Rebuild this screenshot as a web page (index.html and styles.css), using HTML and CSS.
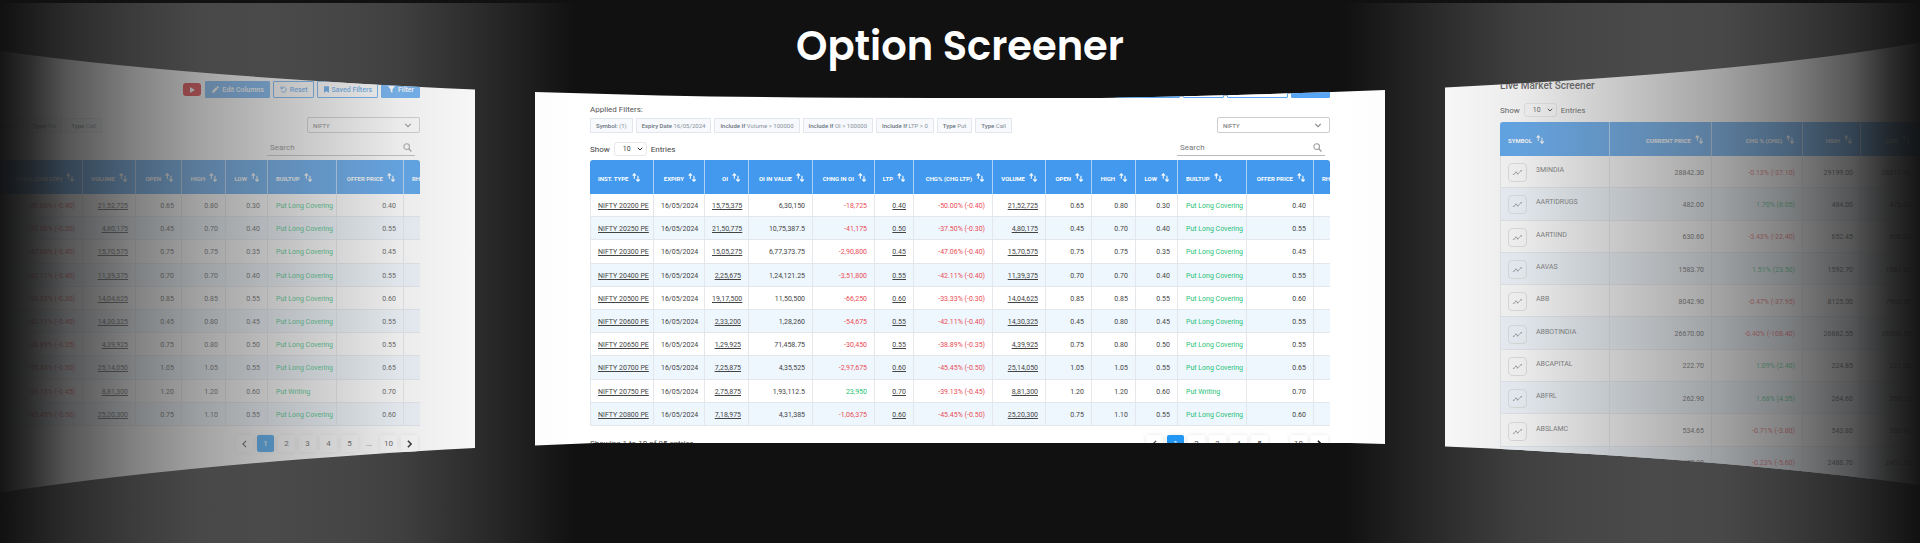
FILE: index.html
```html
<!DOCTYPE html>
<html lang="en">
<head>
<meta charset="utf-8">
<title>Option Screener</title>
<meta name="viewport" content="width=device-width, initial-scale=1">
<link rel="stylesheet" href="styles.css">
</head>
<body>
<svg class="sprite" aria-hidden="true">
  <symbol id="i-sort" viewBox="0 0 14 16"><path d="M4 10V1.5M1 4.5l3-3.2 3 3.2M10.500 5v9M7.500 11.500l3 3.200 3-3.200" fill="none" stroke="currentColor" stroke-width="1.900"/></symbol>
  <symbol id="i-down" viewBox="0 0 12 8"><path d="M1.500 1.500L6 6l4.500-4.500" fill="none" stroke="currentColor" stroke-width="1.800"/></symbol>
  <symbol id="i-search" viewBox="0 0 16 16"><circle cx="6.500" cy="6.500" r="5" fill="none" stroke="currentColor" stroke-width="1.800"/><path d="M10.200 10.200l4.800 4.800" stroke="currentColor" stroke-width="2.200"/></symbol>
  <symbol id="i-pencil" viewBox="0 0 16 16"><path fill="currentColor" d="M0 16l1-5 8-8 4 4-8 8zM10 2l1.500-1.500q1-.8 2 0l2 2q.8 1 0 2L14 6z"/></symbol>
  <symbol id="i-reset" viewBox="0 0 16 16"><path d="M3 5a6 6 0 1 1-.5 5.500M2 1v5h5" fill="none" stroke="currentColor" stroke-width="2"/></symbol>
  <symbol id="i-mark" viewBox="0 0 12 16"><path fill="currentColor" d="M0 1q0-1 1-1h10q1 0 1 1v15l-6-4-6 4z"/></symbol>
  <symbol id="i-funnel" viewBox="0 0 16 16"><path fill="currentColor" d="M0 0h16l-6 8v8l-4-3V8z"/></symbol>
  <symbol id="i-trend" viewBox="0 0 18 10"><path d="M1 9l5-4.500 3.500 3L17 1" fill="none" stroke="currentColor" stroke-width="1.300"/><g fill="currentColor"><circle cx="1.400" cy="8.600" r="1.300"/><circle cx="6" cy="4.500" r="1.300"/><circle cx="9.500" cy="7.500" r="1.300"/><circle cx="16.600" cy="1.400" r="1.300"/></g></symbol>
</svg>

<section class="showcase">
  <h1 class="showcase-title">Option Screener</h1>
  <div class="track" id="track"></div>
</section>

<template id="option-screen">
  <div class="screen">
    <div class="actions">
      <button class="tube" aria-label="Watch video"><svg viewBox="0 0 6 6"><path d="M1 0l5 3-5 3z" fill="#fff"/></svg></button>
      <button class="btn solid"><svg><use href="#i-pencil"/></svg>Edit Columns</button>
      <button class="btn"><svg><use href="#i-reset"/></svg>Reset</button>
      <button class="btn"><svg class="narrow"><use href="#i-mark"/></svg>Saved Filters</button>
      <button class="btn solid"><svg><use href="#i-funnel"/></svg>Filter</button>
    </div>
    <div class="filters">
      <div>
        <p class="filters-label">Applied Filters:</p>
        <ul class="chips">
          <li><b>Symbol:</b> (1)</li>
          <li><b>Expiry Date</b> 16/05/2024</li>
          <li><b>Include If</b> Volume &gt; 100000</li>
          <li><b>Include If</b> OI &gt; 100000</li>
          <li><b>Include If</b> LTP &gt; 0</li>
          <li><b>Type</b> Put</li>
          <li><b>Type</b> Call</li>
        </ul>
      </div>
      <div class="pick pick-wide">
        <select aria-label="Index"><option>NIFTY</option></select>
        <svg><use href="#i-down"/></svg>
      </div>
    </div>
    <div class="tools">
      <label class="show">Show
        <span class="pick"><select><option>10</option></select><svg><use href="#i-down"/></svg></span>
        Entries</label>
      <div class="search">
        <input type="search" placeholder="Search" aria-label="Search">
        <svg><use href="#i-search"/></svg>
      </div>
    </div>
    <div class="table-wrap"><table class="grid options"></table></div>
    <div class="foot">
      <p>Showing 1 to 10 of 95 entries</p>
      <nav class="pages" aria-label="Pages">
        <button aria-label="Previous"><svg viewBox="0 0 6 10"><path d="M5 1L1 5l4 4" fill="none" stroke="currentColor" stroke-width="1.500"/></svg></button>
        <button class="current">1</button><button>2</button><button>3</button><button>4</button><button>5</button>
        <span>...</span>
        <button>10</button>
        <button aria-label="Next"><svg viewBox="0 0 6 10"><path d="M1 1l4 4-4 4" fill="none" stroke="#111" stroke-width="2"/></svg></button>
      </nav>
    </div>
  </div>
</template>

<template id="market-screen">
  <div class="screen market">
    <h2>Live Market Screener</h2>
    <div class="tools">
      <label class="show">Show
        <span class="pick"><select><option>10</option></select><svg><use href="#i-down"/></svg></span>
        Entries</label>
    </div>
    <div class="table-wrap"><table class="grid stocks"></table></div>
  </div>
</template>
<script src="app.js"></script>
</body>
</html>
```

FILE: styles.css
```css
* { box-sizing: border-box; }

body {
  margin: 0;
  background: #111;
  font-family: Roboto, "Liberation Sans", sans-serif;
  color: #444;
}

p, h1, h2, ul { margin: 0; padding: 0; }
button, select, input { font: inherit; color: inherit; }
.sprite { display: none; }

.showcase {
  position: relative;
  display: grid;
  min-height: 100vh;
  overflow: hidden;
}

/* Side shades that fade the outer slides into the dark page */
.showcase::before,
.showcase::after {
  content: "";
  position: absolute;
  z-index: 2;
  top: 3px;
  bottom: 0;
  width: 575px;
  pointer-events: none;
  --stops:
    rgb(17 17 17 / .98) 0,
    rgb(29 29 29 / .93) 30px,
    rgb(48 48 48 / .82) 67px,
    rgb(77 77 77 / .71) 133px,
    rgb(106 106 106 / .62) 200px,
    rgb(126 126 126 / .52) 267px,
    rgb(155 155 155 / .38) 350px,
    rgb(184 184 184 / .28) 400px,
    rgb(202 202 202 / .15) 475px,
    rgb(210 210 210 / .07) 525px,
    rgb(220 220 220 / 0) 575px;
}
.showcase::before { left: 0; background: linear-gradient(90deg, var(--stops)); }
.showcase::after { right: 0; background: linear-gradient(270deg, var(--stops)); }

.showcase-title {
  grid-area: 1 / 1;
  justify-self: center;
  align-self: start;
  z-index: 1;
  padding-top: 22px;
  font: 600 40px/48px Poppins, Inter, sans-serif;
  color: #fff;
}

.track {
  grid-area: 1 / 1;
  display: grid;
  grid-template-columns: repeat(3, 850px);
  gap: 60px;
  justify-content: center;
  min-width: 0;
}

/* Slides: curved edges follow the bend of the carousel */
.slide {
  overflow: hidden;
  background: #fff;
}
.slide-left { clip-path: path("M0 0L375 51Q553 76 850 89.500V448Q569 463 375 492.500L0 560Z"); }
.slide-center { clip-path: path("M0 92L125 95.500Q250 98 400 98H565Q700 96 850 90V444L815 443H60L0 445.500Z"); }
.slide-right { clip-path: path("M0 87.500Q310 72 475 42.500L850 -30V560L475 485Q273 458 0 446.500Z"); }

.screen { padding: 81px 55px 0; font-size: 8px; }
.screen.market { padding-top: 79px; }
.market h2 { font-weight: 500; font-size: 10px; line-height: 14px; margin-bottom: 10px; }

/* Buttons */
.actions { display: flex; justify-content: flex-end; align-items: center; gap: 3px; }
.btn {
  display: flex;
  align-items: center;
  gap: 3px;
  height: 17px;
  padding: 0 5px 0 6px;
  border: 1px solid #58a6f3;
  border-radius: 1px;
  background: #fff;
  color: #4f9fee;
  font-size: 7px;
  font-weight: 500;
}
.btn svg { width: 7px; height: 7px; }
.btn svg.narrow { width: 5px; }
.btn.solid { background: #58a6f3; color: #fff; }
.tube {
  display: grid;
  place-items: center;
  width: 18px;
  height: 13px;
  margin-right: 1px;
  padding: 0;
  border: 0;
  border-radius: 3px;
  background: #d80f14;
}
.tube svg { width: 6px; height: 6px; }

/* Filters */
.filters { display: flex; justify-content: space-between; align-items: flex-end; margin-top: 7px; }
.filters-label { line-height: 9px; color: #555; margin-bottom: 4px; }
.chips { display: flex; gap: 3px; list-style: none; }
.chips li {
  height: 15px;
  padding: 0 5px;
  border: 1px solid #e2e7ee;
  background: #f7f9fc;
  color: #87919b;
  font-size: 6px;
  line-height: 13px;
  white-space: nowrap;
}
.chips b { font-weight: 500; color: #6b7580; }

.pick { display: inline-grid; align-items: center; }
.pick select,
.pick svg { grid-area: 1 / 1; }
.pick select {
  appearance: none;
  width: 33px;
  height: 14px;
  padding: 0 8px;
  border: 1px solid #e6e8ec;
  border-radius: 3px;
  background: transparent;
  font-size: 7px;
}
.pick svg { justify-self: end; width: 6px; height: 4px; margin-right: 4px; color: #111; pointer-events: none; }
.pick-wide select { width: 113px; height: 16px; padding: 0 5px; border-color: #ccc; border-radius: 2px; color: #666; font-size: 6px; }
.pick-wide svg { width: 8px; height: 5px; margin-right: 8px; color: #888; }

.tools { display: flex; justify-content: space-between; margin: 9px 0 4px; }
.market .tools { margin: 0 0 5px; }
.show { display: flex; align-items: center; gap: 4px; height: 14px; color: #444; }
.search { display: flex; align-items: center; width: 148px; height: 14px; margin-right: 5px; padding: 0 3px 2px; border-bottom: 1px solid #bbb; }
.search input { flex: 1; min-width: 0; padding: 0; border: 0; outline: 0; background: none; }
.search input::placeholder { color: #777; }
.search svg { width: 9px; height: 9px; color: #999; }

/* Tables */
.table-wrap { overflow: hidden; border-radius: 3px 3px 0 0; }
.grid { table-layout: fixed; width: 100%; border-collapse: separate; border-spacing: 0; font-size: 7px; }
.options { width: 784px; height: 266px; }
.stocks { height: 357px; }
.grid th {
  height: 34px;
  padding: 0 8px 0 7px;
  border-right: 1px solid #a9d0f7;
  background: #4299ed;
  color: #fff;
  font-size: 6px;
  font-weight: 700;
  text-align: right;
  white-space: nowrap;
}
.grid th svg { width: 8px; height: 9px; margin-left: 4px; vertical-align: -1px; }
.grid td {
  padding: 2px 7px 0;
  border: solid #e3e7ec;
  border-width: 0 1px 1px 0;
  text-align: right;
  white-space: nowrap;
}
.grid td:first-child { border-left-width: 1px; padding-left: 7px; }
.grid .left { text-align: left; padding-left: 8px; }
.grid tbody tr:nth-child(even) { background: #eff7fe; }
.grid a { color: inherit; text-decoration: underline; }
.grid .down { color: #ea4b55; }
.grid .up { color: #1fbf75; }

.stock { display: flex; align-items: center; gap: 9px; color: #666; }
.stock > span { padding-bottom: 5px; }
.chart {
  display: grid;
  place-items: center;
  width: 19px;
  height: 19px;
  padding: 0;
  border: 1px solid #ddd;
  border-radius: 4px;
  background: transparent;
  color: #777;
}
.chart svg { width: 9px; height: 5px; }

/* Footer */
.foot { display: flex; justify-content: space-between; align-items: center; margin: 9px 2px 0 0; }
.pages { display: flex; align-items: center; gap: 4px; }
.pages button {
  display: grid;
  place-items: center;
  width: 17px;
  height: 17px;
  padding: 0;
  border: 0;
  border-radius: 2px;
  background: #fff;
  box-shadow: 0 0 4px #0000001a;
}
.pages button.current { background: #2196f3; color: #fff; }
.pages span { width: 14px; text-align: center; }
.pages svg { width: 5px; height: 8px; }
```

FILE: app.js
```js
const optionCols = [
  ["INST. TYPE", 64], ["EXPIRY", 51], ["OI", 44], ["OI IN VALUE", 64], ["CHNG IN OI", 62],
  ["LTP", 39], ["CHG% (CHG LTP)", 79], ["VOLUME", 53], ["OPEN", 46], ["HIGH", 44],
  ["LOW", 42], ["BUILTUP", 69], ["OFFER PRICE", 67], ["RHO", 60]
];
const optionRows = [
  ["20200", "15,75,375", "6,30,150", "-18,725", "0.40", "-50.00% (-0.40)", "21,52,725", "0.65", "0.80", "0.30", "Put Long Covering", "0.40"],
  ["20250", "21,50,775", "10,75,387.5", "-41,175", "0.50", "-37.50% (-0.30)", "4,80,175", "0.45", "0.70", "0.40", "Put Long Covering", "0.55"],
  ["20300", "15,05,275", "6,77,373.75", "-2,90,800", "0.45", "-47.06% (-0.40)", "15,70,575", "0.75", "0.75", "0.35", "Put Long Covering", "0.45"],
  ["20400", "2,25,675", "1,24,121.25", "-3,51,800", "0.55", "-42.11% (-0.40)", "11,39,375", "0.70", "0.70", "0.40", "Put Long Covering", "0.55"],
  ["20500", "19,17,500", "11,50,500", "-66,250", "0.60", "-33.33% (-0.30)", "14,04,625", "0.85", "0.85", "0.55", "Put Long Covering", "0.60"],
  ["20600", "2,33,200", "1,28,260", "-54,675", "0.55", "-42.11% (-0.40)", "14,30,325", "0.45", "0.80", "0.45", "Put Long Covering", "0.55"],
  ["20650", "1,29,925", "71,458.75", "-30,450", "0.55", "-38.89% (-0.35)", "4,39,925", "0.75", "0.80", "0.50", "Put Long Covering", "0.55"],
  ["20700", "7,25,875", "4,35,525", "-2,97,675", "0.60", "-45.45% (-0.50)", "25,14,050", "1.05", "1.05", "0.55", "Put Long Covering", "0.65"],
  ["20750", "2,75,875", "1,93,112.5", "23,950", "0.70", "-39.13% (-0.45)", "8,81,300", "1.20", "1.20", "0.60", "Put Writing", "0.70"],
  ["20800", "7,18,975", "4,31,385", "-1,06,375", "0.60", "-45.45% (-0.50)", "25,20,300", "0.75", "1.10", "0.55", "Put Long Covering", "0.60"]
];
const stockCols = [["SYMBOL", 110], ["CURRENT PRICE", 102], ["CHG % (CHG)", 91], ["HIGH", 58], ["LOW", 58], ["OPEN", 58], ["VOLUME", 263]];
const stockRows = [
  ["3MINDIA", "28842.30", "-0.13% (-37.10)", "29199.00", "28817.40"],
  ["AARTIDRUGS", "482.00", "1.70% (8.05)", "484.00", "473.00"],
  ["AARTIIND", "630.60", "-3.43% (-22.40)", "652.45", "630.00"],
  ["AAVAS", "1583.70", "1.51% (23.50)", "1592.70", "1561.00"],
  ["ABB", "8042.90", "-0.47% (-37.95)", "8125.00", "7965.00"],
  ["ABBOTINDIA", "26670.00", "-0.40% (-108.40)", "26862.55", "26506.50"],
  ["ABCAPITAL", "222.70", "1.09% (2.40)", "224.85", "221.00"],
  ["ABFRL", "262.90", "1.68% (4.35)", "264.60", "259.10"],
  ["ABSLAMC", "534.65", "-0.71% (-3.80)", "543.80", "532.40"],
  ["ACC", "2457.90", "-0.23% (-5.60)", "2488.70", "2451.35"]
];

const tone = v => (v.startsWith("-") ? "down" : "up");
const link = v => `<td><a href="#">${v}</a></td>`;
const cell = v => `<td>${v}</td>`;

function head(cols, leftCols) {
  return `<colgroup>${cols.map(c => `<col style="width:${c[1]}px">`).join("")}</colgroup><thead><tr>` +
    cols.map(c => `<th class="${leftCols.includes(c[0]) ? "left" : ""}">${c[0]}<svg><use href="#i-sort"/></svg></th>`).join("") +
    "</tr></thead>";
}

function optionRow(r) {
  return `<tr><td class="left"><a href="#">NIFTY ${r[0]} PE</a></td><td>16/05/2024</td>${link(r[1])}${cell(r[2])}` +
    `<td class="${tone(r[3])}">${r[3]}</td>${link(r[4])}<td class="down">${r[5]}</td>${link(r[6])}` +
    `${cell(r[7])}${cell(r[8])}${cell(r[9])}<td class="left up">${r[10]}</td>${cell(r[11])}<td></td></tr>`;
}

function stockRow(r) {
  return `<tr><td class="left"><div class="stock"><button class="chart" aria-label="${r[0]} chart"><svg><use href="#i-trend"/></svg></button>` +
    `<span>${r[0]}</span></div></td>${cell(r[1])}<td class="${tone(r[2])}">${r[2]}</td>${cell(r[3])}${cell(r[4])}<td></td><td></td></tr>`;
}

const track = document.getElementById("track");
[["left", "option-screen"], ["center", "option-screen"], ["right", "market-screen"]].forEach(([side, id]) => {
  const slide = document.createElement("article");
  slide.className = `slide slide-${side}`;
  slide.append(document.getElementById(id).content.cloneNode(true));
  track.append(slide);
});
document.querySelectorAll(".options").forEach(t => {
  t.innerHTML = head(optionCols, ["INST. TYPE", "BUILTUP", "RHO"]) + `<tbody>${optionRows.map(optionRow).join("")}</tbody>`;
});
document.querySelector(".stocks").innerHTML = head(stockCols, ["SYMBOL"]) + `<tbody>${stockRows.map(stockRow).join("")}</tbody>`;
```
